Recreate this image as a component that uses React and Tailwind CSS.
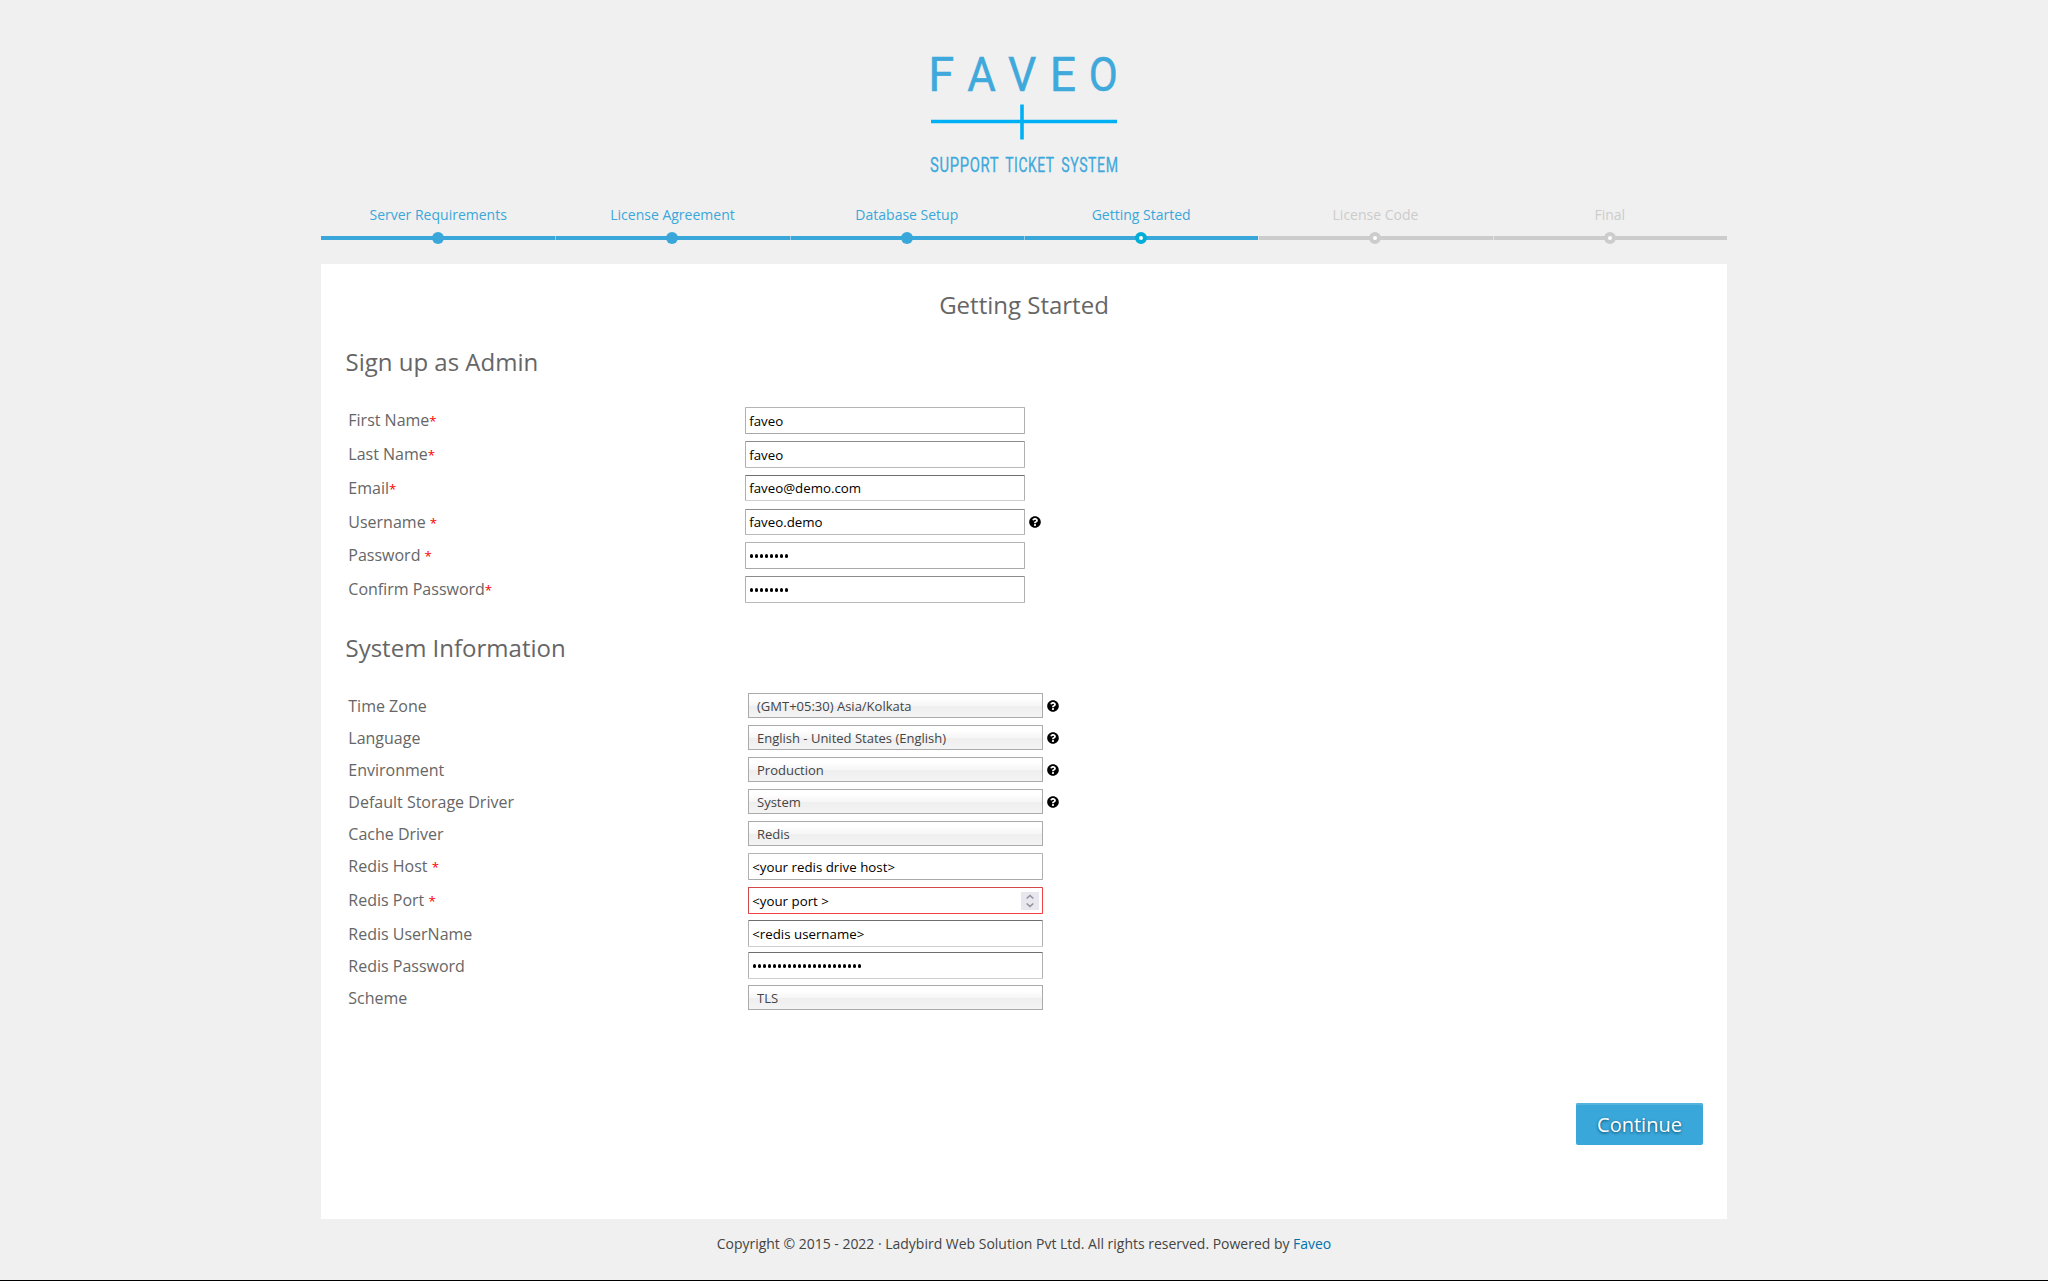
import { FaQuestionCircle } from "react-icons/fa";

const steps = [
  { label: "Server Requirements", state: "done" },
  { label: "License Agreement", state: "done" },
  { label: "Database Setup", state: "done" },
  { label: "Getting Started", state: "current" },
  { label: "License Code", state: "todo" },
  { label: "Final", state: "todo" },
];

const dotStyles = {
  done: "bg-[#3aa7da]",
  current: "bg-white border-4 border-[#00aeda]",
  todo: "bg-white border-4 border-[#ccc]",
};

const adminRows = [
  { label: "First Name", required: true, value: "faveo", row: "h-[34px]", box: "h-[27px] border-t-[#b4b4b4] border-b-[#a8a8a8]" },
  { label: "Last Name", required: true, value: "faveo", row: "h-[34px]", box: "h-[27px] border-t-[#8c8c8c] border-b-[#bababa]" },
  { label: "Email", required: true, value: "faveo@demo.com", compact: true, row: "h-[34px]", box: "h-[26px] border-t-[#6e6e6e] border-b-[#cfcfcf]" },
  { label: "Username ", required: true, value: "faveo.demo", compact: true, help: true, row: "h-[33px]", box: "h-[26px] border-t-[#8c8c8c] border-b-[#bababa]" },
  { label: "Password ", required: true, dots: 8, row: "h-[34px]", box: "h-[27px] border-t-[#b4b4b4] border-b-[#a8a8a8]" },
  { label: "Confirm Password", required: true, dots: 8, row: "h-[34px]", box: "h-[27px] border-t-[#8c8c8c] border-b-[#bababa]" },
];

const systemRows = [
  { label: "Time Zone", select: "(GMT+05:30) Asia/Kolkata", help: true, row: "h-8" },
  { label: "Language", select: "English - United States (English)", help: true, row: "h-8" },
  { label: "Environment", select: "Production", help: true, row: "h-8" },
  { label: "Default Storage Driver", select: "System", help: true, row: "h-8" },
  { label: "Cache Driver", select: "Redis", row: "h-8" },
  { label: "Redis Host ", required: true, value: "<your redis drive host>", row: "h-[34px]", box: "h-[27px] border-t-[#b4b4b4] border-b-[#a8a8a8]" },
  { label: "Redis Port ", required: true, value: "<your port >", spinner: true, row: "h-[34px]", box: "h-[27px] border-t-[#d04848] border-r-[#f04848] border-b-[#f04040] border-l-[#d04848]" },
  { label: "Redis UserName", value: "<redis username>", row: "h-8", box: "-mt-px h-[27px] border-t-[#6e6e6e] border-b-[#cfcfcf]" },
  { label: "Redis Password", dots: 22, row: "h-8", box: "-mt-px h-[27px] border-t-[#6e6e6e] border-b-[#cfcfcf]" },
  { label: "Scheme", select: "TLS", row: "h-8" },
];

function Logo() {
  return (
    <svg width="210" height="142" viewBox="919 44 210 142" className="block overflow-visible">
      <g fill="#3fa9dc" stroke="#3fa9dc" strokeWidth="0.5" fontFamily="Roboto, sans-serif" fontSize="48.800">
        <text x="928.2" y="91" textLength="26" lengthAdjust="spacingAndGlyphs">F</text>
        <text x="967.2" y="91" textLength="28.6" lengthAdjust="spacingAndGlyphs">A</text>
        <text x="1008" y="91" textLength="28.3" lengthAdjust="spacingAndGlyphs">V</text>
        <text x="1049.7" y="91" textLength="26.3" lengthAdjust="spacingAndGlyphs">E</text>
        <text x="1088.8" y="91" textLength="29" lengthAdjust="spacingAndGlyphs">O</text>
      </g>
      <path d="M931 121.500H1117M1022 104.500V139.500" stroke="#00b0f5" strokeWidth="3.600" fill="none" />
      <g fill="#3fa9dc" stroke="#3fa9dc" strokeWidth="0.3" fontFamily="Roboto, sans-serif" fontSize="20.500" letterSpacing="0.8">
        <text transform="translate(930 171.700) scale(0.722 1)" textLength="95.9">SUPPORT</text>
        <text transform="translate(1005.300 171.700) scale(0.678 1)" textLength="72.7">TICKET</text>
        <text transform="translate(1061.300 171.700) scale(0.688 1)" textLength="83.2">SYSTEM</text>
      </g>
    </svg>
  );
}

function Steps() {
  return (
    <ol className="grid grid-cols-6">
      {steps.map((s, i) => (
        <li key={s.label} className="flex flex-col items-center">
          <span className={`text-[14px] leading-[20px] ${s.state === "todo" ? "text-[#ccc]" : "text-[#3aa7da]"}`}>{s.label}</span>
          <span className="mt-[7px] grid h-3 w-full items-center justify-items-center">
            <span className={`col-start-1 row-start-1 h-1 w-full ${s.state === "todo" ? "bg-[#ccc]" : "bg-[#3aa7da]"} ${i > 0 ? "border-l border-white/45" : ""}`} />
            <span className={`col-start-1 row-start-1 size-3 rounded-full ${dotStyles[s.state]}`} />
          </span>
        </li>
      ))}
    </ol>
  );
}

function Dots({ count }) {
  return (
    <span className="flex gap-[1.500px] pt-px pl-[0.500px]">
      {Array.from({ length: count }, (_, i) => (
        <span key={i} className="size-[3.500px] rounded-full bg-black" />
      ))}
    </span>
  );
}

function Spinner() {
  return (
    <span className="mr-[3px] ml-auto flex size-[18px] items-center justify-center bg-[#e8e7ee]">
      <svg width="18" height="18" viewBox="0 0 18 18" fill="none" stroke="#8f8f9d" strokeWidth="1.500">
        <path d="M5.700 6.500L9 3.500L12.300 6.500M5.700 11.500L9 14.500L12.300 11.500" />
      </svg>
    </span>
  );
}

function Row({ item, width }) {
  return (
    <div className={`flex items-start ${item.row}`}>
      <div className={`shrink-0 pt-[5px] pl-[0.300px] text-[16px] leading-[24px] whitespace-pre text-[#666] ${width === "admin" ? "w-[397px]" : "w-[400px]"}`}>
        {item.label}
        {item.required && <span className="text-[13.300px] text-[#f00]">*</span>}
      </div>
      <div className="flex items-center pt-1">
        {item.select ? (
          <div className="flex h-[25px] w-[295px] items-center border border-[#aaa] bg-[linear-gradient(#fff_20%,#f6f6f6_50%,#eee_52%,#f4f4f4_100%)] pt-[2px] pl-2 text-[13px] text-[#444]">
            {item.select}
          </div>
        ) : (
          <div className={`flex items-center rounded-[1px] border border-x-[#b0b0b0] bg-white pl-[3.200px] text-[13.300px] whitespace-pre text-black ${width === "admin" ? "w-[280px]" : "w-[295px]"} ${item.box}`}>
            {item.dots ? (
              <Dots count={item.dots} />
            ) : (
              <span className={`self-start leading-[20px] ${item.compact ? "pt-[2px]" : "pt-[3px]"}`}>{item.value}</span>
            )}
            {item.spinner && <Spinner />}
          </div>
        )}
        {item.help && <FaQuestionCircle className="ml-[3.500px] size-3 text-black" />}
      </div>
    </div>
  );
}

export default function App() {
  return (
    <div className="flex h-[1281px] w-[2048px] flex-col items-center border-b border-black bg-[#f0f0f0] font-['Open_Sans',sans-serif]">
      <div className="mt-[44px]">
        <Logo />
      </div>
      <div className="mt-[19px] w-[1406px]">
        <Steps />
      </div>
      <main className="mt-[20px] h-[955px] w-[1406px] shrink-0 bg-white px-6 text-[#666]">
        <h1 className="pt-[25px] text-center text-[24px] leading-[32px]">Getting Started</h1>
        <h2 className="mt-[25px] pl-[0.500px] text-[24px] leading-[32px]">Sign up as Admin</h2>
        <div className="mt-[25px] pl-[3px]">
          {adminRows.map((r) => <Row key={r.label} item={r} width="admin" />)}
        </div>
        <h2 className="mt-[26px] pl-[0.500px] text-[24px] leading-[32px]">System Information</h2>
        <div className="mt-[25px] pl-[3px]">
          {systemRows.map((r) => <Row key={r.label} item={r} width="system" />)}
        </div>
        <div className="mt-[90px] flex justify-end">
          <button className="h-[42px] w-[127px] rounded-[2px] bg-[#3aa7da] pt-[2px] text-[20px] text-white shadow-[inset_0_2px_0_#54b4e0] [text-shadow:0_1px_3px_#00496b]">Continue</button>
        </div>
      </main>
      <footer className="mt-[14px] text-[13.970px] leading-[22px] text-[#444]">
        Copyright © 2015 - 2022 · Ladybird Web Solution Pvt Ltd. All rights reserved. Powered by <a className="text-[#0073aa]">Faveo</a>
      </footer>
    </div>
  );
}
